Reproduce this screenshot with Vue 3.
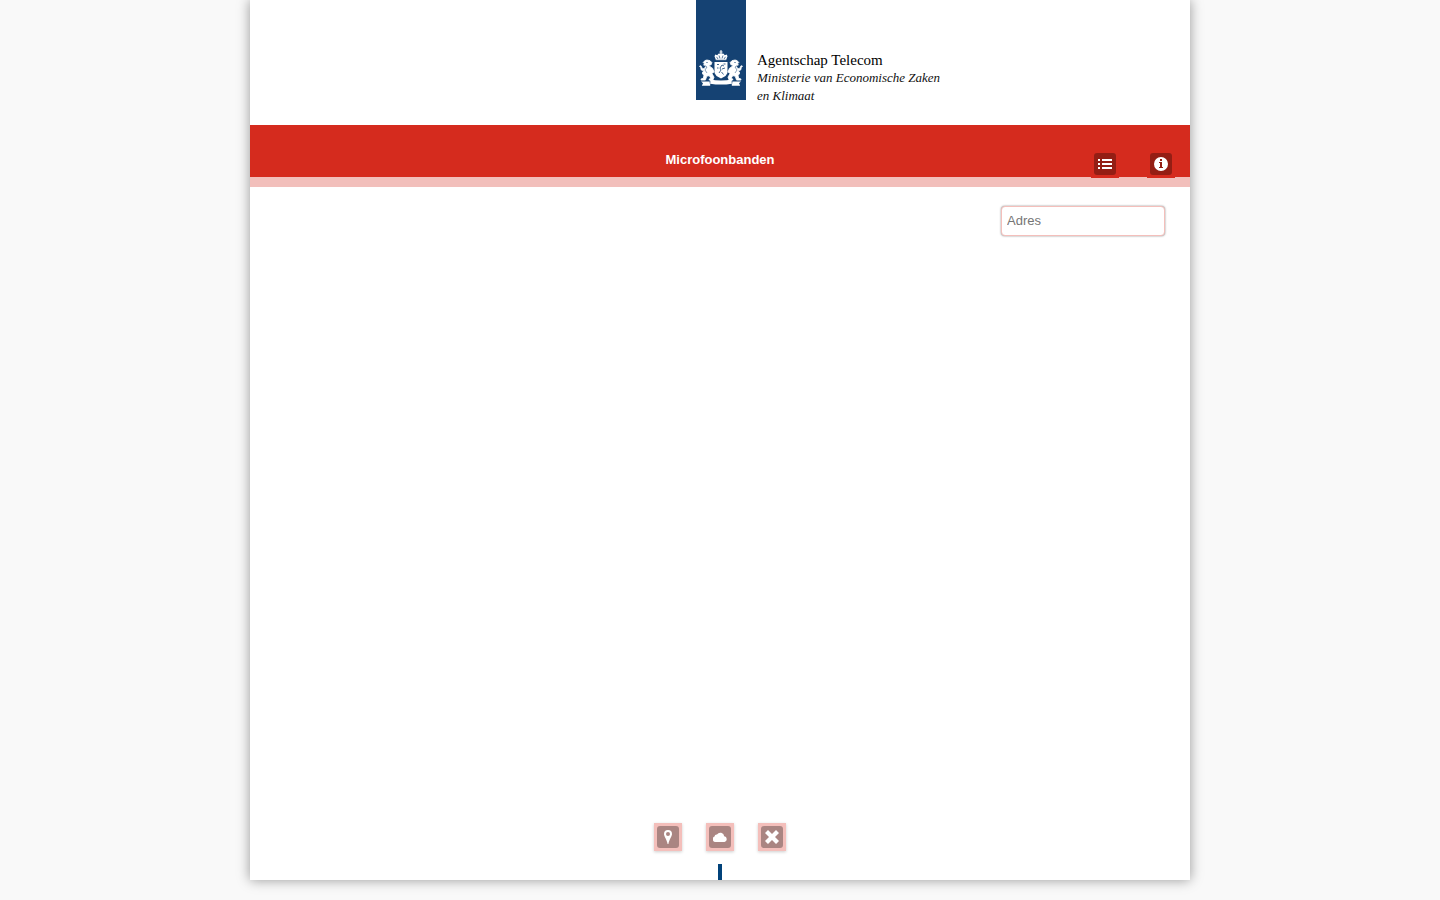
<script setup>
import { ref } from 'vue'

const address = ref('')
</script>

<template>
  <div class="page">
    <header class="brand">
      <div class="ribbon">
        <svg class="crest" viewBox="0 0 44 36" aria-hidden="true">
          <g fill="#fff">
            <path d="M21.5 0h1v1.4h1v1h-1v1.2l2.200.2 1 1.400 2-.6.8 1.600-1.500 4.100h-10l-1.500-4.100.8-1.600 2 .6 1-1.400 2.200-.2V2.400h-1v-1h1z" />
            <path d="M15.500 12h13v11l-2 3-4.500 2.500-4.500-2.500-2-3z" />
            <g stroke="#fff" stroke-width=".8" stroke-linejoin="round">
              <path d="M13.500 18.200 11.500 17l-1.600-1.800 2.200-.4.8-2.200-2-2-3-.6-2 .6-1.700 2 1.200 1.200-.7 1.300 2 .9-1.400 2.800-2-.4-1.400-2.700-1.400.5 1.200 1.400.6 2.400 2.400.8-1.500 2.200 1.700 2.600-.6 2.700-2.200.6v1.200h4.300l1.500-4 2.300-.4 1.600 2.400-1.600 1v1h3.700l1.100-2.900-2.100-3.800 2.200-1.500z" />
              <path d="M30.500 18.200 32.500 17l1.600-1.800-2.200-.4-.8-2.200 2-2 3-.6 2 .6 1.700 2-1.200 1.200.7 1.300-2 .9 1.400 2.800 2-.4 1.400-2.700 1.400.5-1.200 1.400-.6 2.400-2.400.8 1.500 2.200-1.700 2.600.6 2.700 2.200.6v1.200h-4.300l-1.500-4-2.300-.4-1.600 2.400 1.600 1v1h-3.700l-1.100-2.900 2.100-3.800-2.200-1.500z" />
            </g>
            <path d="M2 31.500h9v-2q11 2 22 0v2h9l-2 1.800 1.200 2.400h-8.400v-2q-10.800 1.700-21.600 0v2H2.800L4 33.300z" />
          </g>
          <g fill="none" stroke="#154273">
            <path d="M17.500 6.800 19 9M20 5.500l1 3M24 5.500l-1 3M26.500 6.800 25 9M17 10.200h10" stroke-width=".7" />
            <path d="M18 14.500h2M24.500 14h2M18 18h1.500M20 23l2-3-1-2 2-3 2 1M23 19l3-1M22.500 22l2 2.500" stroke-width=".8" />
            <path d="M5.500 15.500 8 17l-2 3 2 3M38.500 15.500 36 17l2 3-2 3M7 12.500h2M35 12.500h2" stroke-width=".5" />
            <path d="M11 30.800v2.700M33 30.800v2.700" stroke-width=".6" />
          </g>
        </svg>
      </div>
      <div class="wordmark">
        <span class="agency">Agentschap Telecom</span>
        <em>Ministerie van Economische Zaken<br>en Klimaat</em>
      </div>
    </header>

    <div class="bar">
      <h1>Microfoonbanden</h1>
      <nav class="actions">
        <button type="button" class="tool" aria-label="Lijst">
          <svg viewBox="0 0 14 14" aria-hidden="true">
            <path d="M0 2h2v2H0zM4 2h10v2H4zM0 6h2v2H0zM4 6h10v2H4zM0 10h2v2H0zM4 10h10v2H4z" />
          </svg>
        </button>
        <button type="button" class="tool" aria-label="Informatie">
          <svg viewBox="0 0 14 14" aria-hidden="true">
            <path fill-rule="evenodd" d="M7 0a7 7 0 1 0 0 14A7 7 0 0 0 7 0zM6 2h2v2H6zM5 5h3v5h1v1H5v-1h1V6H5z" />
          </svg>
        </button>
      </nav>
    </div>

    <main>
      <input v-model="address" type="text" placeholder="Adres" aria-label="Adres">
    </main>

    <footer>
      <div class="map-tools">
        <button type="button" class="tool pale" aria-label="Locatie">
          <svg viewBox="0 0 14 14" aria-hidden="true">
            <path fill-rule="evenodd" d="M7 0a4 4 0 0 0-4 4c0 2.400 2.600 5 3.600 10h.8c1-5 3.600-7.600 3.600-10a4 4 0 0 0-4-4zm0 2a2 2 0 1 1 0 4 2 2 0 0 1 0-4z" />
          </svg>
        </button>
        <button type="button" class="tool pale" aria-label="Wolk">
          <svg viewBox="0 0 14 14" aria-hidden="true">
            <path d="M2.500 12A2.800 2.800 0 0 1 1.500 6.600 2.300 2.300 0 0 1 4 4.600 3.900 3.900 0 0 1 11.200 6.300 2.900 2.900 0 0 1 11.500 12z" />
          </svg>
        </button>
        <button type="button" class="tool pale" aria-label="Wissen">
          <svg viewBox="0 0 14 14" aria-hidden="true">
            <path d="m0 3 3-3 4 4 4-4 3 3-4 4 4 4-3 3-4-4-4 4-3-3 4-4z" />
          </svg>
        </button>
      </div>
      <div class="marker"></div>
    </footer>
  </div>
</template>

<style>
body {
  background: #f9f9f9;
}
</style>

<style scoped>
.page {
  display: flex;
  flex-direction: column;
  box-sizing: border-box;
  max-width: 940px;
  min-height: calc(100vh - 20px);
  margin: 0 auto 20px;
  background: #fff;
  box-shadow: 0 0 12px rgba(0, 0, 0, 0.4);
  font: 13px/20px "Liberation Sans", Arial, sans-serif;
}

.brand {
  display: flex;
  align-items: flex-start;
  gap: 11px;
  padding: 0 0 20px calc(50% - 24px);
}

.ribbon {
  display: flex;
  flex: none;
  width: 50px;
  height: 100px;
  align-items: flex-end;
  justify-content: center;
  background: #154273;
}

.crest {
  width: 44px;
  height: 36px;
  margin-bottom: 14px;
}

.wordmark {
  padding-top: 51px;
  color: #111;
  font: 13px/18px "Liberation Serif", "Times New Roman", serif;
  white-space: nowrap;
}

.agency {
  display: block;
  color: #000;
  font-size: 15px;
}

.bar {
  display: grid;
  grid-template-columns: 1fr auto 1fr;
  height: 52px;
  border-bottom: 10px solid #f2bfbb;
  background: #d52b1e;
}

h1 {
  grid-column: 2;
  margin: 25px 0 0;
  color: #fff;
  font-size: 13px;
  line-height: 20px;
}

.actions {
  display: flex;
  justify-content: flex-end;
  gap: 28px;
  padding: 25px 15px 0 0;
}

.tool {
  position: relative;
  display: grid;
  flex: none;
  width: 28px;
  height: 28px;
  padding: 0;
  border: 0;
  background: #d52b1e;
  place-items: center;
  cursor: pointer;
}

.tool::before {
  position: absolute;
  inset: 3px;
  border-radius: 3px;
  background: rgba(0, 0, 0, 0.3);
  content: "";
}

.tool svg {
  position: relative;
  width: 14px;
  height: 14px;
  fill: #fff;
}

.pale {
  background: #f4bfbb;
  box-shadow: 0 1px 3px rgba(0, 0, 0, 0.2);
}

main {
  display: flex;
  flex: 1;
  align-items: flex-start;
  justify-content: flex-end;
  padding: 19px 25px;
}

input {
  box-sizing: border-box;
  width: 164px;
  height: 30px;
  padding: 0 5px 1px;
  border: 1px solid #f4bfbb;
  border-radius: 4px;
  background: #fff;
  box-shadow: 0 0 2px rgba(0, 0, 0, 0.5);
  color: #333;
  font: inherit;
}

input::placeholder {
  color: #757575;
}

footer {
  display: flex;
  flex-direction: column;
  align-items: center;
  gap: 13px;
}

.map-tools {
  display: flex;
  gap: 24px;
}

.marker {
  width: 4px;
  height: 16px;
  background: #01427a;
}
</style>
